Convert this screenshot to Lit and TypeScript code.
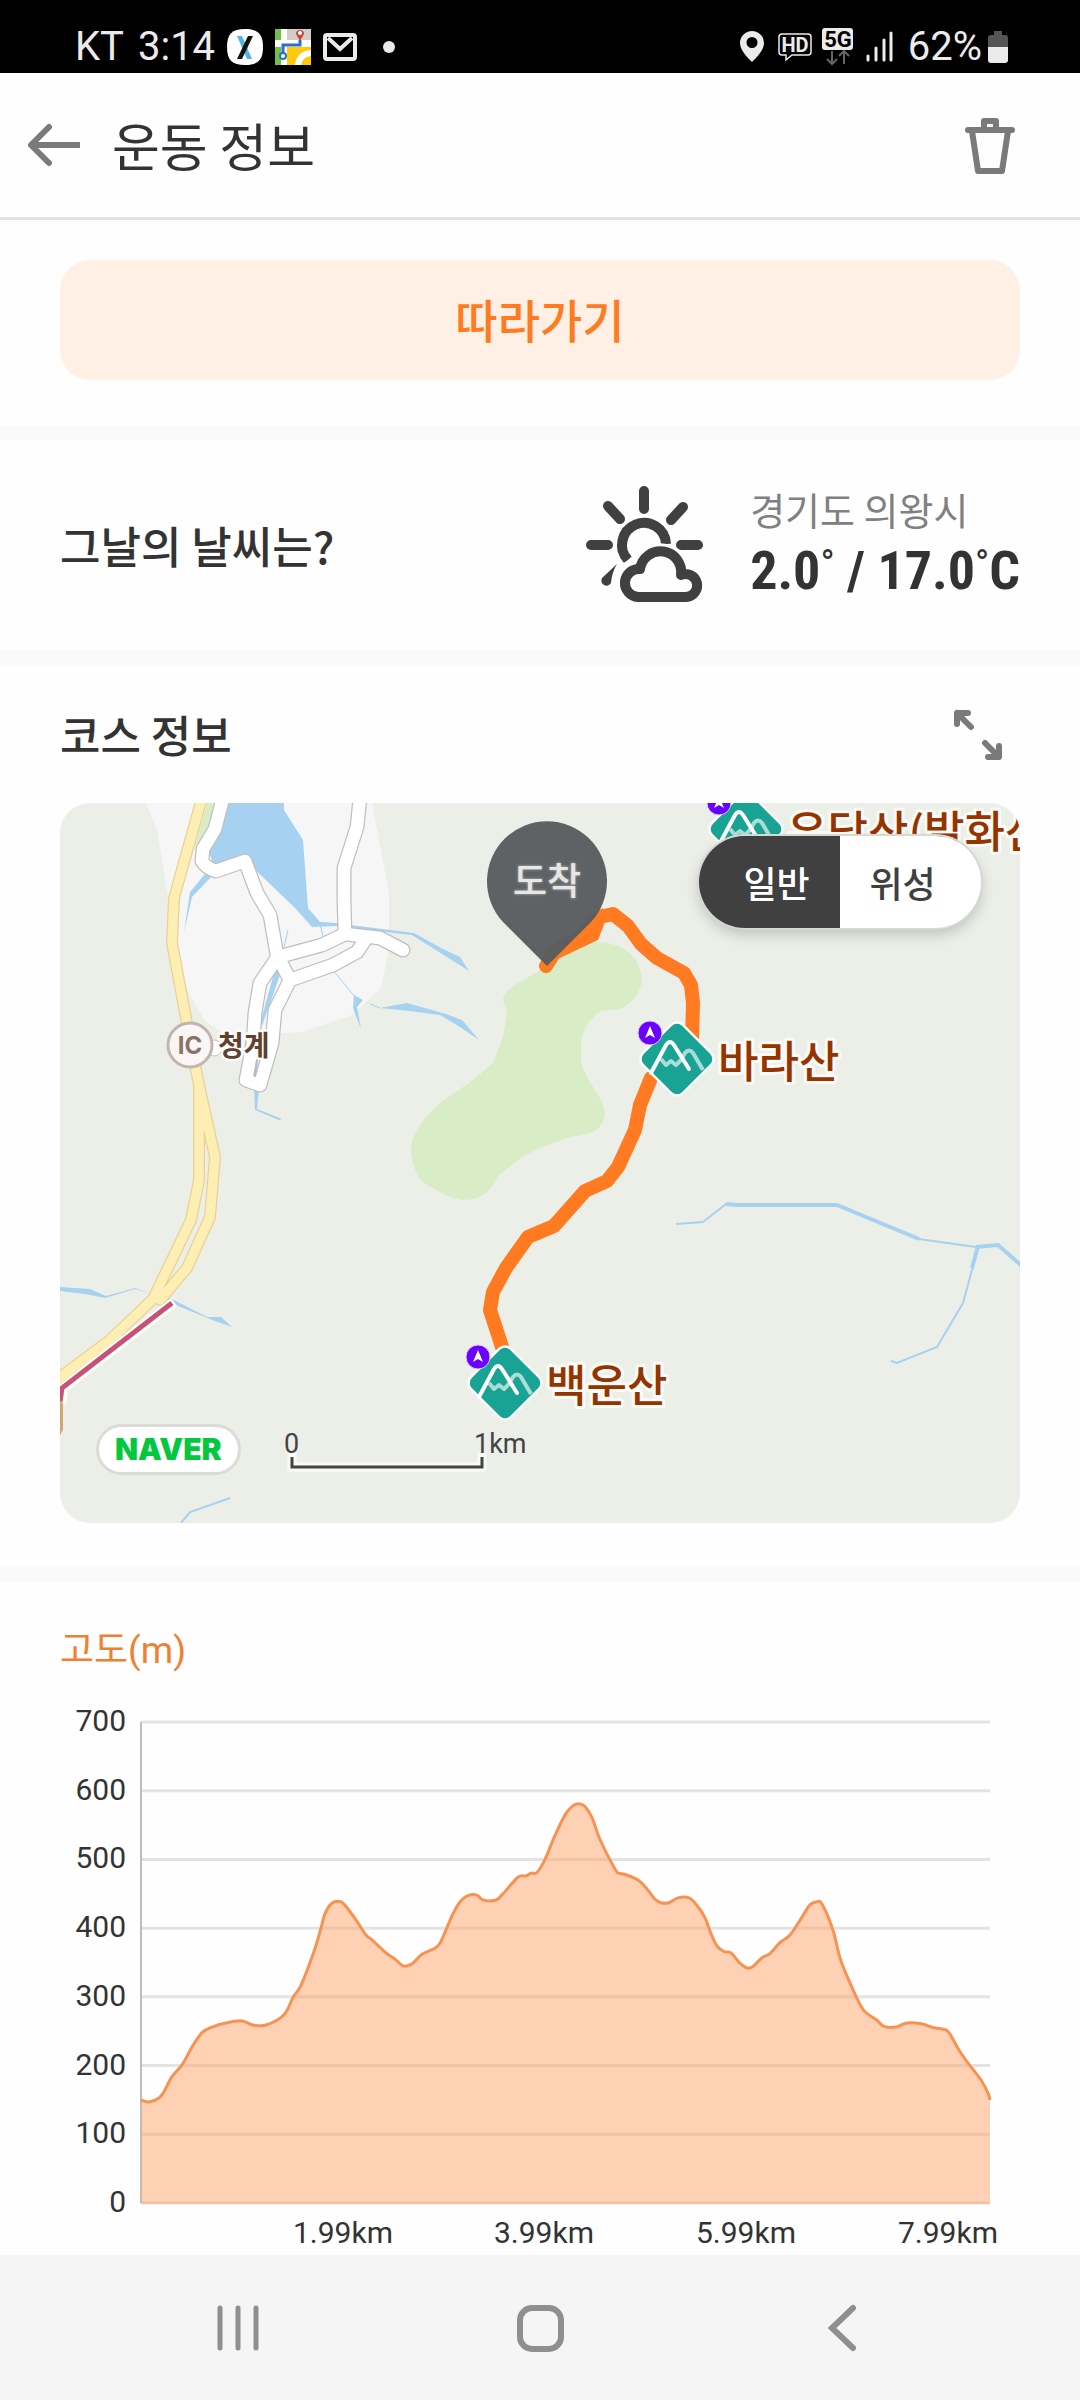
import { LitElement, html, svg, css } from "lit";
import { customElement, state } from "lit/decorators.js";
import { classMap } from "lit/directives/class-map.js";

type Point = [number, number];

/* Elevation profile: [position along the plot, elevation in metres] */
const PROFILE: Point[] = [
  [0, 150], [8, 147], [18, 153], [23, 162], [31, 184], [41, 201], [51, 227], [61, 248],
  [71, 256], [85, 262], [101, 265], [112, 259], [125, 259], [143, 274], [152, 299],
  [160, 317], [173, 366], [180, 400], [184, 421], [190, 435], [197, 439], [203, 435],
  [214, 414], [225, 390], [231, 383], [245, 364], [254, 355], [262, 345], [271, 348],
  [281, 362], [293, 370], [299, 378], [306, 401], [312, 421], [320, 440], [328, 448],
  [336, 448], [342, 441], [355, 441], [362, 450], [377, 474], [385, 476], [390, 480],
  [396, 481], [404, 500], [414, 535], [425, 567], [432, 578], [438, 581], [444, 577],
  [451, 561], [459, 529], [474, 486], [478, 480], [484, 478], [497, 470], [506, 457],
  [514, 442], [520, 437], [528, 437], [537, 444], [548, 444], [556, 433], [564, 415],
  [570, 392], [576, 374], [583, 366], [590, 364], [599, 349], [606, 342], [612, 344],
  [621, 357], [629, 363], [639, 379], [649, 390], [661, 416], [669, 434], [675, 438],
  [681, 435], [692, 397], [700, 352], [714, 304], [723, 280], [736, 266], [743, 257],
  [755, 256], [766, 262], [780, 261], [793, 255], [802, 253], [808, 248], [819, 220],
  [829, 200], [840, 179], [847, 160], [849, 150],
];

const PLOT = { left: 81, right: 930, top: 22, bottom: 503, max: 700 };
const Y_TICKS = [700, 600, 500, 400, 300, 200, 100, 0];
const X_TICKS = [
  { at: 283, label: "1.99km" },
  { at: 484, label: "3.99km" },
  { at: 686, label: "5.99km" },
  { at: 888, label: "7.99km" },
];

const yOf = (elevation: number) =>
  PLOT.bottom - ((PLOT.bottom - PLOT.top) * elevation) / PLOT.max;

/* Catmull-Rom spline through the points, written as cubic segments */
function spline(points: Point[]): string {
  let d = `M${points[0][0]} ${points[0][1].toFixed(1)}`;
  for (let i = 0; i < points.length - 1; i++) {
    const a = points[Math.max(i - 1, 0)];
    const b = points[i];
    const c = points[i + 1];
    const e = points[Math.min(i + 2, points.length - 1)];
    const n = [
      b[0] + (c[0] - a[0]) / 6, b[1] + (c[1] - a[1]) / 6,
      c[0] - (e[0] - b[0]) / 6, c[1] - (e[1] - b[1]) / 6,
      c[0], c[1],
    ].map((v) => v.toFixed(1));
    d += `C${n.join(" ")}`;
  }
  return d;
}

@customElement("status-bar")
class StatusBar extends LitElement {
  static styles = css`
    :host {
      display: flex;
      justify-content: space-between;
      align-items: center;
      height: 53px;
      padding: 20px 72px 0 75px;
      background: #000;
      color: #ebebeb;
      font: 400 40px/46px Roboto, "Liberation Sans", sans-serif;
    }
    .group { display: flex; align-items: center; }
    .left { gap: 12px; }
    .clock { display: flex; gap: 14px; }
    .right { gap: 10px; }
    .battery { display: flex; align-items: center; gap: 6px; margin-left: 4px; }
    svg { display: block; }
    .tag { font: 700 20px Roboto, sans-serif; fill: #ebebeb; text-anchor: middle; }
    .net { font: 700 22px Roboto, sans-serif; fill: #000; text-anchor: middle; }
  `;
  render() {
    return html`
      <div class="group left">
        <span class="clock"><span>KT</span><span>3:14</span></span>
        <svg width="36" height="36" viewBox="0 0 36 36" aria-hidden="true">
          <path d="M18 0C31 0 36 5 36 18S31 36 18 36 0 31 0 18 5 0 18 0Z" fill="#fff" />
          <path d="M10 7H15L25 30H20Z" fill="#53b4e4" />
          <path d="M21 7H26L15 30H10Z" fill="#111" />
        </svg>
        <svg width="36" height="36" viewBox="0 0 36 36" aria-hidden="true">
          <path d="M0 0H36V36H0Z" fill="#fff" />
          <path d="M0 0H6V11H0ZM0 18H6V36H0Z" fill="#72bf44" />
          <path d="M12 0H36V11H12Z" fill="#d2cec6" />
          <path d="M12 18H36V36H12Z" fill="#ffc90e" />
          <path d="M36 24Q24 25 23 37" fill="none" stroke="#fff" stroke-width="6" />
          <path d="M25 11V16H8V25" fill="none" stroke="#2470d8" stroke-width="3" />
          <circle cx="8" cy="27" r="3" fill="#fff" stroke="#2470d8" stroke-width="2" />
          <path d="M25 12L21 5A4 4 0 1 1 29 5Z" fill="#c5443c" />
          <circle cx="25" cy="4" r="2" fill="#fff" />
        </svg>
        <svg width="34" height="28" viewBox="0 0 34 28" aria-hidden="true" fill="none" stroke="#ebebeb">
          <rect x="2" y="2" width="30" height="24" rx="2" stroke-width="4" />
          <path d="M5 5L17 16L29 5" stroke-width="4" />
        </svg>
        <svg width="36" height="12" viewBox="0 0 36 12" aria-hidden="true"><circle cx="20" cy="6" r="6" fill="#ebebeb" /></svg>
      </div>
      <div class="group right">
        <svg width="28" height="32" viewBox="0 0 28 32" aria-hidden="true">
          <path fill="#ebebeb" fill-rule="evenodd" d="M12 0A12 12 0 0 1 24 12C24 19 17 26 12 31C7 26 0 19 0 12A12 12 0 0 1 12 0ZM12 6A5 5 0 1 0 12 17A5 5 0 0 0 12 6Z" />
        </svg>
        <svg width="34" height="30" viewBox="0 0 34 30">
          <path d="M4 2H30Q33 2 33 5V20Q33 23 30 23H14L8 28V23H4Q1 23 1 20V5Q1 2 4 2Z" fill="none" stroke="#ebebeb" stroke-width="1.5" />
          <text class="tag" x="17" y="20">HD</text>
        </svg>
        <svg width="34" height="42" viewBox="0 0 34 42">
          <rect x="0" y="2" width="31" height="22" rx="3" fill="#ebebeb" />
          <text class="net" x="16" y="21">5G</text>
          <path d="M10 25V38M5 33L10 38L15 33M22 38V25M17 30L22 25L27 30" fill="none" stroke="#666" stroke-width="2" />
        </svg>
        <svg width="28" height="32" viewBox="0 0 28 32" aria-hidden="true" stroke="#ebebeb" stroke-width="3" stroke-linecap="round">
          <path d="M2 25V29M10 17V29M18 9V29M25 2V29" />
        </svg>
        <span class="battery">
          62%
          <svg width="20" height="32" viewBox="0 0 20 32" aria-hidden="true">
            <path d="M6 0H14V4H17Q20 4 20 7V17H0V7Q0 4 3 4H6Z" fill="#555" />
            <path d="M0 16H20V29Q20 32 17 32H3Q0 32 0 29Z" fill="#ebebeb" />
          </svg>
        </span>
      </div>
    `;
  }
}

@customElement("course-map")
class CourseMap extends LitElement {
  @state() private mode = "normal";

  static styles = css`
    :host { display: block; position: relative; border-radius: 30px; overflow: hidden; }
    .map { display: block; width: 100%; height: auto; background: #ecefe8; }
    .peak {
      font: 500 44px "Noto Sans CJK KR", sans-serif;
      fill: #963400; stroke: #fbfbf8; stroke-width: 6px; stroke-linejoin: round; paint-order: stroke;
    }
    .place {
      font: 700 28px "Noto Sans CJK KR", sans-serif;
      fill: #5e4130; stroke: #fbfbf8; stroke-width: 5px; stroke-linejoin: round; paint-order: stroke;
    }
    .junction { font: 700 24px Inter, sans-serif; fill: #8a7265; text-anchor: middle; }
    .pin { font: 500 37px "Noto Sans CJK KR", sans-serif; fill: #e6e6e6; text-anchor: middle; text-shadow: 0 0 3px #bbb; }
    .scale { font: 400 27px Roboto, sans-serif; fill: #444; }
    .toggle {
      position: absolute; top: 33px; right: 39px;
      display: flex; border-radius: 46px;
      box-shadow: 0 0 0 2px #d6d9d2, 0 6px 14px rgba(0, 0, 0, 0.2);
    }
    .mode {
      width: 141px; height: 92px; padding: 0; border: 0; background: #fff; color: #404040;
      font: 500 36px/52px "Noto Sans CJK KR", sans-serif;
    }
    .mode:first-child { padding-left: 14px; border-radius: 46px 0 0 46px; }
    .mode:last-child { padding-right: 16px; border-radius: 0 46px 46px 0; }
    .mode.on { background: #404040; color: #fff; }
    .naver {
      position: absolute; left: 36px; bottom: 48px;
      padding: 0 16px; border: 3px solid #dadcd6; border-radius: 26px; background: #fff;
      color: #03c73c; text-decoration: none;
      font: 900 30px/45px Inter, "Liberation Sans", sans-serif;
    }
  `;

  private peak(x: number, y: number, name: string) {
    return svg`
      <g transform="translate(${x} ${y})">
        <rect x="-27" y="-27" width="54" height="54" rx="7" transform="rotate(45)" fill="#19a394" stroke="#fbfdfb" stroke-width="5" paint-order="stroke" />
        <path d="M-16 0L-11 6L-6 2L-1 6L4 1L8 -6Q12 -11 16 -6L26 11" fill="none" stroke="#a9ddd6" stroke-width="4" stroke-linejoin="round" />
        <path d="M-26 14L-11 -14Q-7 -20 -3 -14L12 10" fill="none" stroke="#fff" stroke-width="4" stroke-linecap="round" />
        <circle cx="-27" cy="-26" r="12" fill="#6a00ff" stroke="#d9cdf5" stroke-width="1" />
        <path d="M-27 -33L-22 -21L-27 -24L-32 -21Z" fill="#fff" />
        <text class="peak" x="41" y="19">${name}</text>
      </g>`;
  }

  private modeButton(id: string, label: string) {
    return html`<button
      type="button"
      class=${classMap({ mode: true, on: this.mode === id })}
      aria-pressed=${this.mode === id ? "true" : "false"}
      @click=${() => (this.mode = id)}
    >${label}</button>`;
  }

  render() {
    const whiteRoads =
      "M223 798L215 829L203 849L202 861Q206 868 216 871L245 861L257 893L270 915L277 955L290 980" +
      "M360 798L357 827L344 868V900L345 934" +
      "M278 957L322 945L345 934L380 938L403 950" +
      "M290 980L313 972L333 965L357 952L365 940" +
      "M277 958L260 983L255 1013L253 1043L246 1080L260 1085" +
      "M290 980L275 1010L272 1043L260 1085";
    const highways =
      "M202 798L174 898L172 943L191 1045L199 1085V1180L191 1220L153 1299L110 1340L55 1381" +
      "M199 1085L215 1157L210 1217L187 1268L160 1300";
    return html`
      <svg class="map" viewBox="60 803 960 720" role="img" aria-label="코스 지도">
        <path d="M146 803L157 830L168 897L187 990L206 1022L228 1036L302 1032L352 1015L381 988L389 950V893L372 803Z" fill="#f6f6f6" />
        <path d="M207 803H217L207 830L194 850Z" fill="#d8edc5" />
        <path d="M537 972L563 955L597 942Q613 941 630 953Q642 966 642 980Q639 1000 622 1008Q612 1011 603 1010Q583 1022 581 1043V1063Q585 1075 593 1087Q605 1104 605 1116Q600 1130 593 1132Q580 1136 570 1137L543 1147L522 1157L497 1177Q488 1200 463 1200Q450 1200 420 1180Q411 1165 411 1147Q413 1130 430 1113L440 1103L473 1080L493 1063L503 1037L507 1013L503 1000Q504 990 520 982Z" fill="#d8edc5" />
        <g fill="#a6d1f1">
          <path d="M229 803H284V810L303 840L308 908L320 922L338 923V926L312 927L295 908L245 860L215 868L208 850L222 830Z" />
          <path d="M350 925L414 933L443 949L460 957L469 971L458 964L412 935L350 928Z" />
          <path d="M380 1008L407 1003L446 1014L462 1020L479 1040L460 1027L440 1015L410 1011Z" />
          <path d="M354 995L363 1000L357 1007L361 1029L353 1008Z" />
          <path d="M205 874L211 877L192 897L184 932L190 892Z" />
          <path d="M276 966L280 975L262 1026L260 1024Z" />
          <path d="M254 1088H259L257 1109L282 1119L279 1120L255 1110Z" />
          <path d="M60 1287L90 1289L106 1296L135 1288L149 1293L135 1289L105 1298L85 1294L60 1291Z" />
          <path d="M168 1297L207 1317L221 1317L232 1327L215 1321L168 1302Z" />
        </g>
        <g fill="none" stroke="#a6d1f1">
          <path d="M288 930L284 947M320 925L323 936M333 970L355 997M370 1004L380 1008" stroke-width="1" />
          <path d="M181 1523L190 1512L230 1498" stroke-width="2" />
          <path d="M676 1224L703 1222L726 1204H740M919 1239L976 1247" stroke-width="2" />
          <path d="M726 1204L737 1205H837L919 1239M976 1247L998 1245L1022 1266" stroke-width="4" />
          <path d="M978 1248L963 1303L937 1347L897 1363L891 1361" stroke-width="2" />
          <path d="M978 1246L972 1268" stroke-width="4" />
        </g>
        <circle cx="214" cy="1048" r="8" fill="#fff" stroke="#c4c4c4" />
        <g fill="none" stroke-linejoin="round" stroke-linecap="round">
          <path d=${whiteRoads} stroke="#bfbfbf" stroke-width="15" />
          <path d=${whiteRoads} stroke="#fff" stroke-width="12.5" />
          <path d="M257 1060L255 1076" stroke="#a9bfce" stroke-width="2" />
          <path d=${highways} stroke="#e9d194" stroke-width="12" />
          <path d=${highways} stroke="#fdeeb3" stroke-width="9.5" />
        </g>
        <path d="M174 1302L63 1388L61 1403" fill="none" stroke="#fff" stroke-width="10" />
        <path d="M172 1303L62 1388L60 1402" fill="none" stroke="#c95274" stroke-width="5" />
        <path d="M60 1401H62L63 1405V1430L60 1435Z" fill="#d2a870" />

        <g fill="none" stroke="#ff7a20" stroke-width="14" stroke-linejoin="round" stroke-linecap="round">
          <path d="M546 966L556 950L580 938L592 925L600 917L613 914L628 926L641 944L657 958L684 973L691 985L693 1003L692 1040" />
          <path d="M651 1078L640 1105L635 1130L618 1167L607 1181L585 1191L554 1226L528 1237L506 1268L493 1292L490 1310L503 1350" />
        </g>
        <path d="M562 957L598 940L605 922L603 908L587 917L573 937L550 950L543 967Z" fill="#ff7a20" />

        ${this.peak(746, 829, "우담산(발화산)")}
        ${this.peak(677, 1059, "바라산")}
        ${this.peak(505, 1383, "백운산")}

        <circle cx="190" cy="1045" r="22" fill="#f9f6f5" stroke="#c0b5b0" stroke-width="3" />
        <text class="junction" x="190" y="1054">IC</text>
        <text class="place" x="218" y="1056">청계</text>

        <path d="M547 966L503 922A60 60 0 1 1 591 922Z" fill="#575c5f" opacity="0.96" />
        <text class="pin" x="547" y="895">도착</text>

        <path d="M292 1457V1467H482V1457" fill="none" stroke="#f8faf5" stroke-width="9" stroke-linecap="square" />
        <path d="M292 1457V1467H482V1457" fill="none" stroke="#444" stroke-width="3" />
        <text class="scale" x="284" y="1453">0</text>
        <text class="scale" x="474" y="1453">1km</text>
      </svg>
      <div class="toggle" role="group" aria-label="지도 유형">
        ${this.modeButton("normal", "일반")}${this.modeButton("satellite", "위성")}
      </div>
      <a class="naver" href="#naver">NAVER</a>
    `;
  }
}

@customElement("elevation-chart")
class ElevationChart extends LitElement {
  static styles = css`
    :host { display: block; }
    svg { display: block; width: 100%; height: auto; }
    text { font: 400 30px Roboto, "Liberation Sans", sans-serif; fill: #333; }
    .value { text-anchor: end; }
    .distance { text-anchor: middle; }
  `;
  render() {
    const line = spline(PROFILE.map(([x, e]) => [PLOT.left + x, yOf(e)] as Point));
    return html`
      <svg viewBox="0 0 960 555" role="img" aria-label="고도(m)">
        ${Y_TICKS.map(
          (t) => svg`
            <path d="M${PLOT.left} ${yOf(t)}H${PLOT.right}" stroke="#e3e3e3" stroke-width="3" />
            <text class="value" x="66" y=${yOf(t) + 9}>${t}</text>`
        )}
        <path d="M81 22V503" stroke="#bdbdbd" stroke-width="2" />
        <path d="${line}V${PLOT.bottom + 1}H${PLOT.left}Z" fill="#fda369" fill-opacity="0.5" />
        <path d=${line} fill="none" stroke="#f69352" stroke-width="3" />
        ${X_TICKS.map((t) => svg`<text class="distance" x=${t.at} y="543">${t.label}</text>`)}
      </svg>
    `;
  }
}

@customElement("app-root")
class AppRoot extends LitElement {
  static styles = css`
    :host {
      display: flex;
      flex-direction: column;
      min-height: 100vh;
      background: #fefefe;
      color: #333;
      font-family: "Noto Sans CJK KR", sans-serif;
    }
    h1, h2, p { margin: 0; font-weight: 500; }
    button { padding: 0; border: 0; background: none; color: inherit; font-family: inherit; }
    svg { display: block; }
    .header {
      display: flex; align-items: center; gap: 28px;
      height: 144px; padding: 0 60px 0 24px;
      border-bottom: 3px solid #e2e2e2;
    }
    .header h1 { flex: 1; font-size: 52px; line-height: 72px; font-weight: 400; }
    .section { padding: 0 60px; border-bottom: 15px solid #fafafa; }
    .action { padding-top: 40px; padding-bottom: 45px; }
    .follow {
      display: block; width: 100%; height: 120px; padding-bottom: 4px; border-radius: 30px;
      background: #fff0e6; color: #ff7a20;
      font-size: 46px; line-height: 64px; font-weight: 500;
    }
    .weather { display: flex; align-items: center; height: 210px; }
    .title { flex: 1; font-size: 44px; line-height: 64px; }
    .forecast { display: flex; align-items: center; gap: 44px; }
    .region { font-size: 38px; line-height: 52px; font-weight: 400; color: #808080; }
    .degrees {
      font: 700 54px/72px "Roboto Condensed", "Liberation Sans Narrow", sans-serif;
    }
    .ring { font-size: 38px; line-height: 1px; font-weight: 400; vertical-align: 12px; }
    .heading { display: flex; align-items: center; height: 138px; padding-right: 16px; }
    .course { padding-bottom: 44px; }
    .elevation { flex: 1; padding: 42px 60px 0; }
    .elevation h2 {
      margin-bottom: 22px; color: #f07f34;
      font: 400 37px/54px Roboto, "Noto Sans CJK KR", sans-serif;
    }
    .nav {
      display: grid; grid-template-columns: repeat(3, 1fr);
      height: 145px; padding: 0 8%; background: #f5f5f5;
    }
    .nav button { display: flex; align-items: center; justify-content: center; }
  `;
  render() {
    return html`
      <status-bar></status-bar>
      <header class="header">
        <button type="button" aria-label="뒤로">
          <svg width="60" height="48" viewBox="24 121 60 48" fill="none" stroke="#7a7a7a" stroke-width="6" stroke-linejoin="round">
            <path d="M31 145H80" /><path d="M49 127L31 145L49 163" stroke-linecap="round" />
          </svg>
        </button>
        <h1>운동 정보</h1>
        <button type="button" aria-label="삭제">
          <svg width="60" height="60" viewBox="960 115 60 60" fill="none" stroke="#7a7a7a" stroke-width="6" stroke-linejoin="round" stroke-linecap="round">
            <path d="M968 130H1012M984 130V121H996V130M972 131L978 171H1002L1008 131" />
          </svg>
        </button>
      </header>

      <section class="section action">
        <button type="button" class="follow">따라가기</button>
      </section>

      <section class="section weather">
        <h2 class="title">그날의 날씨는?</h2>
        <div class="forecast">
          <svg width="122" height="122" viewBox="584 485 122 122" role="img" aria-label="구름 조금" fill="none" stroke="#404040" stroke-width="10">
            <path d="M644 492V510M591 546H608M681 546H698M608 507L620 520M683 508L671 521" stroke-linecap="round" />
            <path d="M628 561A22 22 0 1 1 666 545" />
            <path d="M638 598A13.500 13.500 0 0 1 641 570A20.500 20.500 0 0 1 681 576A11.500 11.500 0 1 1 686 598Z" fill="#fefefe" stroke="#fefefe" stroke-width="23" stroke-linejoin="round" />
            <path d="M638 598A13.500 13.500 0 0 1 640 570A20.500 20.500 0 0 1 681 576A11.500 11.500 0 1 1 686 598Z" stroke-linejoin="round" />
            <path d="M617 565L602 579A5 5 0 0 0 611 584Q612 573 617 565Z" fill="#404040" stroke="none" />
          </svg>
          <div>
            <p class="region">경기도 의왕시</p>
            <p class="degrees">2.0<span class="ring">°</span> / 17.0<span class="ring">°</span>C</p>
          </div>
        </div>
      </section>

      <section class="section course">
        <div class="heading">
          <h2 class="title">코스 정보</h2>
          <button type="button" aria-label="지도 확대">
            <svg width="52" height="52" viewBox="952 708 52 52" fill="none" stroke="#7a7a7a" stroke-width="6" stroke-linecap="round" stroke-linejoin="round">
              <path d="M968 713H957V724M957 713L971 727M988 757H999V746M999 757L985 743" />
            </svg>
          </button>
        </div>
        <course-map></course-map>
      </section>

      <section class="elevation">
        <h2>고도(m)</h2>
        <elevation-chart></elevation-chart>
      </section>

      <nav class="nav" aria-label="시스템">
        <button type="button" aria-label="최근 앱">
          <svg width="46" height="48" viewBox="0 0 46 48" stroke="#8f8f8f" stroke-width="5" stroke-linecap="round">
            <path d="M5 4V44M23 4V44M41 4V44" />
          </svg>
        </button>
        <button type="button" aria-label="홈">
          <svg width="48" height="48" viewBox="0 0 48 48" fill="none" stroke="#8f8f8f" stroke-width="6">
            <rect x="4" y="4" width="41" height="41" rx="12" />
          </svg>
        </button>
        <button type="button" aria-label="이전">
          <svg width="30" height="48" viewBox="0 0 30 48" fill="none" stroke="#8f8f8f" stroke-width="6" stroke-linecap="round">
            <path d="M26 4L5 24L26 44" />
          </svg>
        </button>
      </nav>
    `;
  }
}
